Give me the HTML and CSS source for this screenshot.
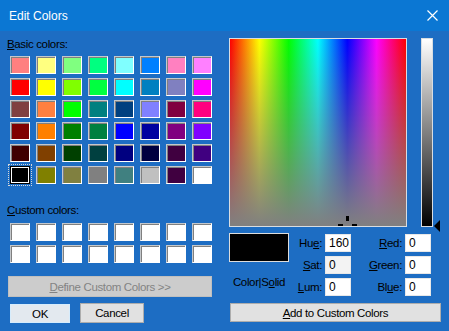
FILE: index.html
```html
<!DOCTYPE html>
<html>
<head>
<meta charset="utf-8">
<link rel="stylesheet" href="styles.css">
</head>
<body>
<div class="titlebar">
  <span class="title">Edit Colors</span>
  <svg class="close" width="11" height="11" viewBox="0 0 11 11"><path d="M0.5 0.5L10.5 10.5M10.5 0.5L0.5 10.5" stroke="#fff" stroke-width="1.2" fill="none"/></svg>
</div>
<div class="main">
  <div class="left">
    <div class="label"><u>B</u>asic colors:</div>
    <div class="grid basic">
      <div class="sw" style="background:#ff8080"></div><div class="sw" style="background:#ffff80"></div><div class="sw" style="background:#80ff80"></div><div class="sw" style="background:#00ff80"></div><div class="sw" style="background:#80ffff"></div><div class="sw" style="background:#0080ff"></div><div class="sw" style="background:#ff80c0"></div><div class="sw" style="background:#ff80ff"></div>
      <div class="sw" style="background:#ff0000"></div><div class="sw" style="background:#ffff00"></div><div class="sw" style="background:#80ff00"></div><div class="sw" style="background:#00ff40"></div><div class="sw" style="background:#00ffff"></div><div class="sw" style="background:#0080c0"></div><div class="sw" style="background:#8080c0"></div><div class="sw" style="background:#ff00ff"></div>
      <div class="sw" style="background:#804040"></div><div class="sw" style="background:#ff8040"></div><div class="sw" style="background:#00ff00"></div><div class="sw" style="background:#008080"></div><div class="sw" style="background:#004080"></div><div class="sw" style="background:#8080ff"></div><div class="sw" style="background:#800040"></div><div class="sw" style="background:#ff0080"></div>
      <div class="sw" style="background:#800000"></div><div class="sw" style="background:#ff8000"></div><div class="sw" style="background:#008000"></div><div class="sw" style="background:#008040"></div><div class="sw" style="background:#0000ff"></div><div class="sw" style="background:#0000a0"></div><div class="sw" style="background:#800080"></div><div class="sw" style="background:#8000ff"></div>
      <div class="sw" style="background:#400000"></div><div class="sw" style="background:#804000"></div><div class="sw" style="background:#004000"></div><div class="sw" style="background:#004040"></div><div class="sw" style="background:#000080"></div><div class="sw" style="background:#000040"></div><div class="sw" style="background:#400040"></div><div class="sw" style="background:#400080"></div>
      <div class="sw selected" style="background:#000000"></div><div class="sw" style="background:#808000"></div><div class="sw" style="background:#808040"></div><div class="sw" style="background:#808080"></div><div class="sw" style="background:#408080"></div><div class="sw" style="background:#c0c0c0"></div><div class="sw" style="background:#400040"></div><div class="sw" style="background:#ffffff"></div>
    </div>
    <div class="label custom-label"><u>C</u>ustom colors:</div>
    <div class="grid custom">
      <div class="sw"></div><div class="sw"></div><div class="sw"></div><div class="sw"></div><div class="sw"></div><div class="sw"></div><div class="sw"></div><div class="sw"></div>
      <div class="sw"></div><div class="sw"></div><div class="sw"></div><div class="sw"></div><div class="sw"></div><div class="sw"></div><div class="sw"></div><div class="sw"></div>
    </div>
    <button class="btn define"><u>D</u>efine Custom Colors &gt;&gt;</button>
    <div class="okrow">
      <button class="btn ok">OK</button>
      <button class="btn cancel">Cancel</button>
    </div>
  </div>
  <div class="right">
    <div class="pickers">
      <div class="spectrum">
        <span class="ch ch-top"></span>
        <span class="ch ch-left"></span>
        <span class="ch ch-right"></span>
      </div>
      <div class="lumwrap">
        <div class="lum"></div>
        <span class="arrow"></span>
      </div>
    </div>
    <div class="controls">
      <div class="sample">
        <div class="solid"></div>
        <div class="cs">Color|S<u>o</u>lid</div>
      </div>
      <div class="fields">
        <span class="fl">Hu<u>e</u>:</span><span class="inp">160</span>
        <span class="fl"><u>R</u>ed:</span><span class="inp">0</span>
        <span class="fl"><u>S</u>at:</span><span class="inp sat">0</span>
        <span class="fl"><u>G</u>reen:</span><span class="inp">0</span>
        <span class="fl"><u>L</u>um:</span><span class="inp">0</span>
        <span class="fl">Bl<u>u</u>e:</span><span class="inp">0</span>
      </div>
    </div>
    <button class="btn add"><u>A</u>dd to Custom Colors</button>
  </div>
</div>
</body>
</html>
```
FILE: styles.css
```css
* { box-sizing: border-box; }

body {
  margin: 0;
  width: 449px;
  height: 331px;
  overflow: hidden;
  background: #1d6dc3;
  font-family: "Liberation Sans", Arial, sans-serif;
  font-size: 11.5px;
  letter-spacing: -0.35px;
  color: #000;
}

.titlebar {
  height: 31px;
  background: #0b77d3;
  display: flex;
  align-items: center;
  justify-content: space-between;
  padding: 0 11px 0 9px;
  color: #fff;
}

.title {
  font-size: 12px;
  letter-spacing: 0;
  line-height: 12px;
}

.close { display: block; }

.main { display: flex; }

.left {
  width: 229px;
  padding-top: 7px;
}

.label {
  line-height: 13px;
  padding-left: 7px;
}

.grid {
  display: grid;
  grid-template-columns: repeat(8, 20px);
  grid-auto-rows: 18px;
  column-gap: 6px;
  row-gap: 4px;
  margin-left: 10px;
  margin-top: 5px;
}

.sw {
  background: #fff;
  border: 1px solid;
  border-color: #c4c8cc #ffffff #ffffff #c4c8cc;
  box-shadow: inset 1px 1px 0 #808080;
}

.sw.selected {
  border: 1px solid #000;
  box-shadow: inset 0 0 0 1px #fff;
  outline: 1px dotted #d8d8d8;
  outline-offset: 1px;
}

.custom-label { margin-top: 20px; }

.grid.custom { margin-top: 6px; }

.btn {
  display: block;
  font-family: inherit;
  font-size: inherit;
  letter-spacing: inherit;
  color: #000;
  background: #e1e1e1;
  border: 1px solid #adadad;
  padding: 0;
  line-height: 16px;
}

.define {
  margin: 13px 0 0 8px;
  width: 204px;
  height: 21px;
  background: #cccccc;
  border-color: #bfbfbf;
  color: #838383;
}

.okrow {
  display: flex;
  gap: 10px;
  margin: 6px 0 0 10px;
}

.ok {
  width: 60px;
  height: 19px;
  margin-top: 1px;
  background: #e3e9ef;
  border: 1px solid #d6ecfc;
}

.cancel {
  width: 64px;
  height: 20px;
}

.right {
  padding-top: 7px;
  width: 220px;
}

.pickers {
  display: flex;
  gap: 14px;
  height: 189px;
}

.spectrum {
  position: relative;
  width: 178px;
  height: 189px;
  border: 1px solid #d8dde2;
  overflow: hidden;
  background:
    linear-gradient(to bottom, rgba(128,128,128,0) 0%, #808080 100%),
    linear-gradient(to right, #ff0000 0%, #ffff00 16.67%, #00ff00 33.33%, #00ffff 50%, #0000ff 66.67%, #ff00ff 83.33%, #ff0000 100%);
}

.ch {
  position: absolute;
  background: #000;
}
.ch-top { left: 116px; top: 177px; width: 3px; height: 5px; }
.ch-left { left: 108px; top: 185px; width: 5px; height: 3px; }
.ch-right { left: 122px; top: 185px; width: 5px; height: 3px; }

.lumwrap {
  position: relative;
  width: 12px;
}

.lum {
  width: 12px;
  height: 189px;
  border: 1px solid #d8dde2;
  background: linear-gradient(to bottom, #ffffff, #808080 50%, #000000);
}

.arrow {
  position: absolute;
  left: 13px;
  top: 182px;
  width: 0;
  height: 0;
  border-top: 6px solid transparent;
  border-bottom: 6px solid transparent;
  border-right: 6px solid #000;
}

.controls {
  display: flex;
  margin-top: 6px;
}

.sample {
  width: 60px;
  display: flex;
  flex-direction: column;
  align-items: center;
}

.solid {
  width: 60px;
  height: 29px;
  background: #000;
  border: 1px solid #dcdcdc;
}

.cs {
  margin-top: 14px;
  line-height: 13px;
}

.fields {
  margin-top: 1px;
  display: grid;
  grid-template-columns: 33px 26px 48px 26px;
  grid-auto-rows: 18px;
  column-gap: 3px;
  row-gap: 4px;
}

.fl {
  display: flex;
  align-items: center;
  justify-content: flex-end;
}

.inp {
  display: flex;
  align-items: center;
  padding-left: 3px;
  background: #fff;
  border: 1px solid #e8e8e8;
  font-size: 12px;
  letter-spacing: 0;
}

.inp.sat { background: #f3f3f3; }

.add {
  margin: 7px 0 0 1px;
  width: 211px;
  height: 19px;
}
```
